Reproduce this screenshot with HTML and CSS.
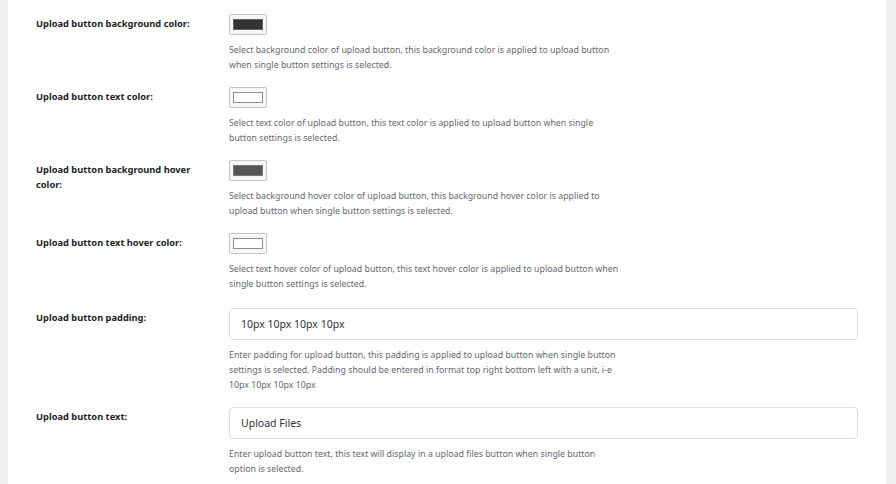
FILE: index.html
```html
<!DOCTYPE html>
<html lang="en">
<head>
  <meta charset="UTF-8">
  <meta name="viewport" content="width=device-width, initial-scale=1.0">
  <title> Upload Button Settings </title>
  <link rel="stylesheet" href="styles.css">
</head>
<body>
  <div class="wrap">
    <div class="panel">

      <div class="row">
        <div class="label"> Upload button background color: </div>
        <div class="field">
          <button class="swatch"><span class="chip dark"></span></button>
          <p class="desc">Select background color of upload button, this background color is applied to upload button<br>when single button settings is selected.</p>
        </div>
      </div>

      <div class="row">
        <div class="label"> Upload button text color: </div>
        <div class="field">
          <button class="swatch"><span class="chip light"></span></button>
          <p class="desc">Select text color of upload button, this text color is applied to upload button when single<br>button settings is selected.</p>
        </div>
      </div>

      <div class="row">
        <div class="label"> Upload button background hover color: </div>
        <div class="field">
          <button class="swatch"><span class="chip hover"></span></button>
          <p class="desc">Select background hover color of upload button, this background hover color is applied to<br>upload button when single button settings is selected.</p>
        </div>
      </div>

      <div class="row">
        <div class="label"> Upload button text hover color: </div>
        <div class="field">
          <button class="swatch"><span class="chip light"></span></button>
          <p class="desc">Select text hover color of upload button, this text hover color is applied to upload button when<br>single button settings is selected.</p>
        </div>
      </div>

      <div class="row row-input">
        <div class="label"> Upload button padding: </div>
        <div class="field">
          <input type="text" class="text" value="10px 10px 10px 10px">
          <p class="desc">Enter padding for upload button, this padding is applied to upload button when single button<br>settings is selected. Padding should be entered in format top right bottom left with a unit, i-e<br>10px 10px 10px 10px</p>
        </div>
      </div>

      <div class="row">
        <div class="label"> Upload button text: </div>
        <div class="field">
          <input type="text" class="text" value="Upload Files">
          <p class="desc">Enter upload button text, this text will display in a upload files button when single button<br>option is selected.</p>
        </div>
      </div>

    </div>
  </div>
</body>
</html>
```

FILE: styles.css
```css
body{
  margin: 0;
  background-color: #f0f0f1;
  font-family: "Noto Sans", "Open Sans", sans-serif;
}

.wrap{
  padding-left: 8px;
  padding-right: 10px;
}

.panel{
  background-color: white;
  padding: 6px 0 0 28px;
  height: 484px;
  box-sizing: border-box;
}

.row{
  display: flex;
  padding: 8px 0 6px 0;
}

.row-input{
  padding-top: 10px;
}

.label{
  width: 193px;
  flex-shrink: 0;
  box-sizing: border-box;
  padding: 2px 24px 0 0;
  font-size: 9.3px;
  font-weight: bold;
  line-height: 15px;
  color: #1d2327;
}

.field{
  flex: 1;
  padding-right: 28px;
}

.swatch{
  display: block;
  width: 38px;
  height: 21px;
  padding: 0;
  border: 1px solid #c3c4c7;
  border-radius: 2px;
  background-color: #f6f7f7;
  box-sizing: border-box;
}

.chip{
  display: block;
  width: 30px;
  height: 11px;
  margin: 0 auto;
  box-sizing: border-box;
  border: 1px solid #8c8f94;
}

.dark{
  background-color: #333333;
  border-color: #666;
}

.hover{
  background-color: #555555;
  border-color: #777;
}

.light{
  background-color: white;
}

.desc{
  margin: 8px 0 0 0;
  font-size: 8.8px;
  line-height: 15px;
  color: #646970;
  white-space: nowrap;
}

.text{
  display: block;
  width: 100%;
  height: 32px;
  box-sizing: border-box;
  border: 1px solid #dcdcde;
  border-radius: 4px;
  padding: 0 11px;
  font-family: "Noto Sans", "Open Sans", sans-serif;
  font-size: 10.5px;
  color: #2c3338;
  margin-bottom: 1px;
}
```
